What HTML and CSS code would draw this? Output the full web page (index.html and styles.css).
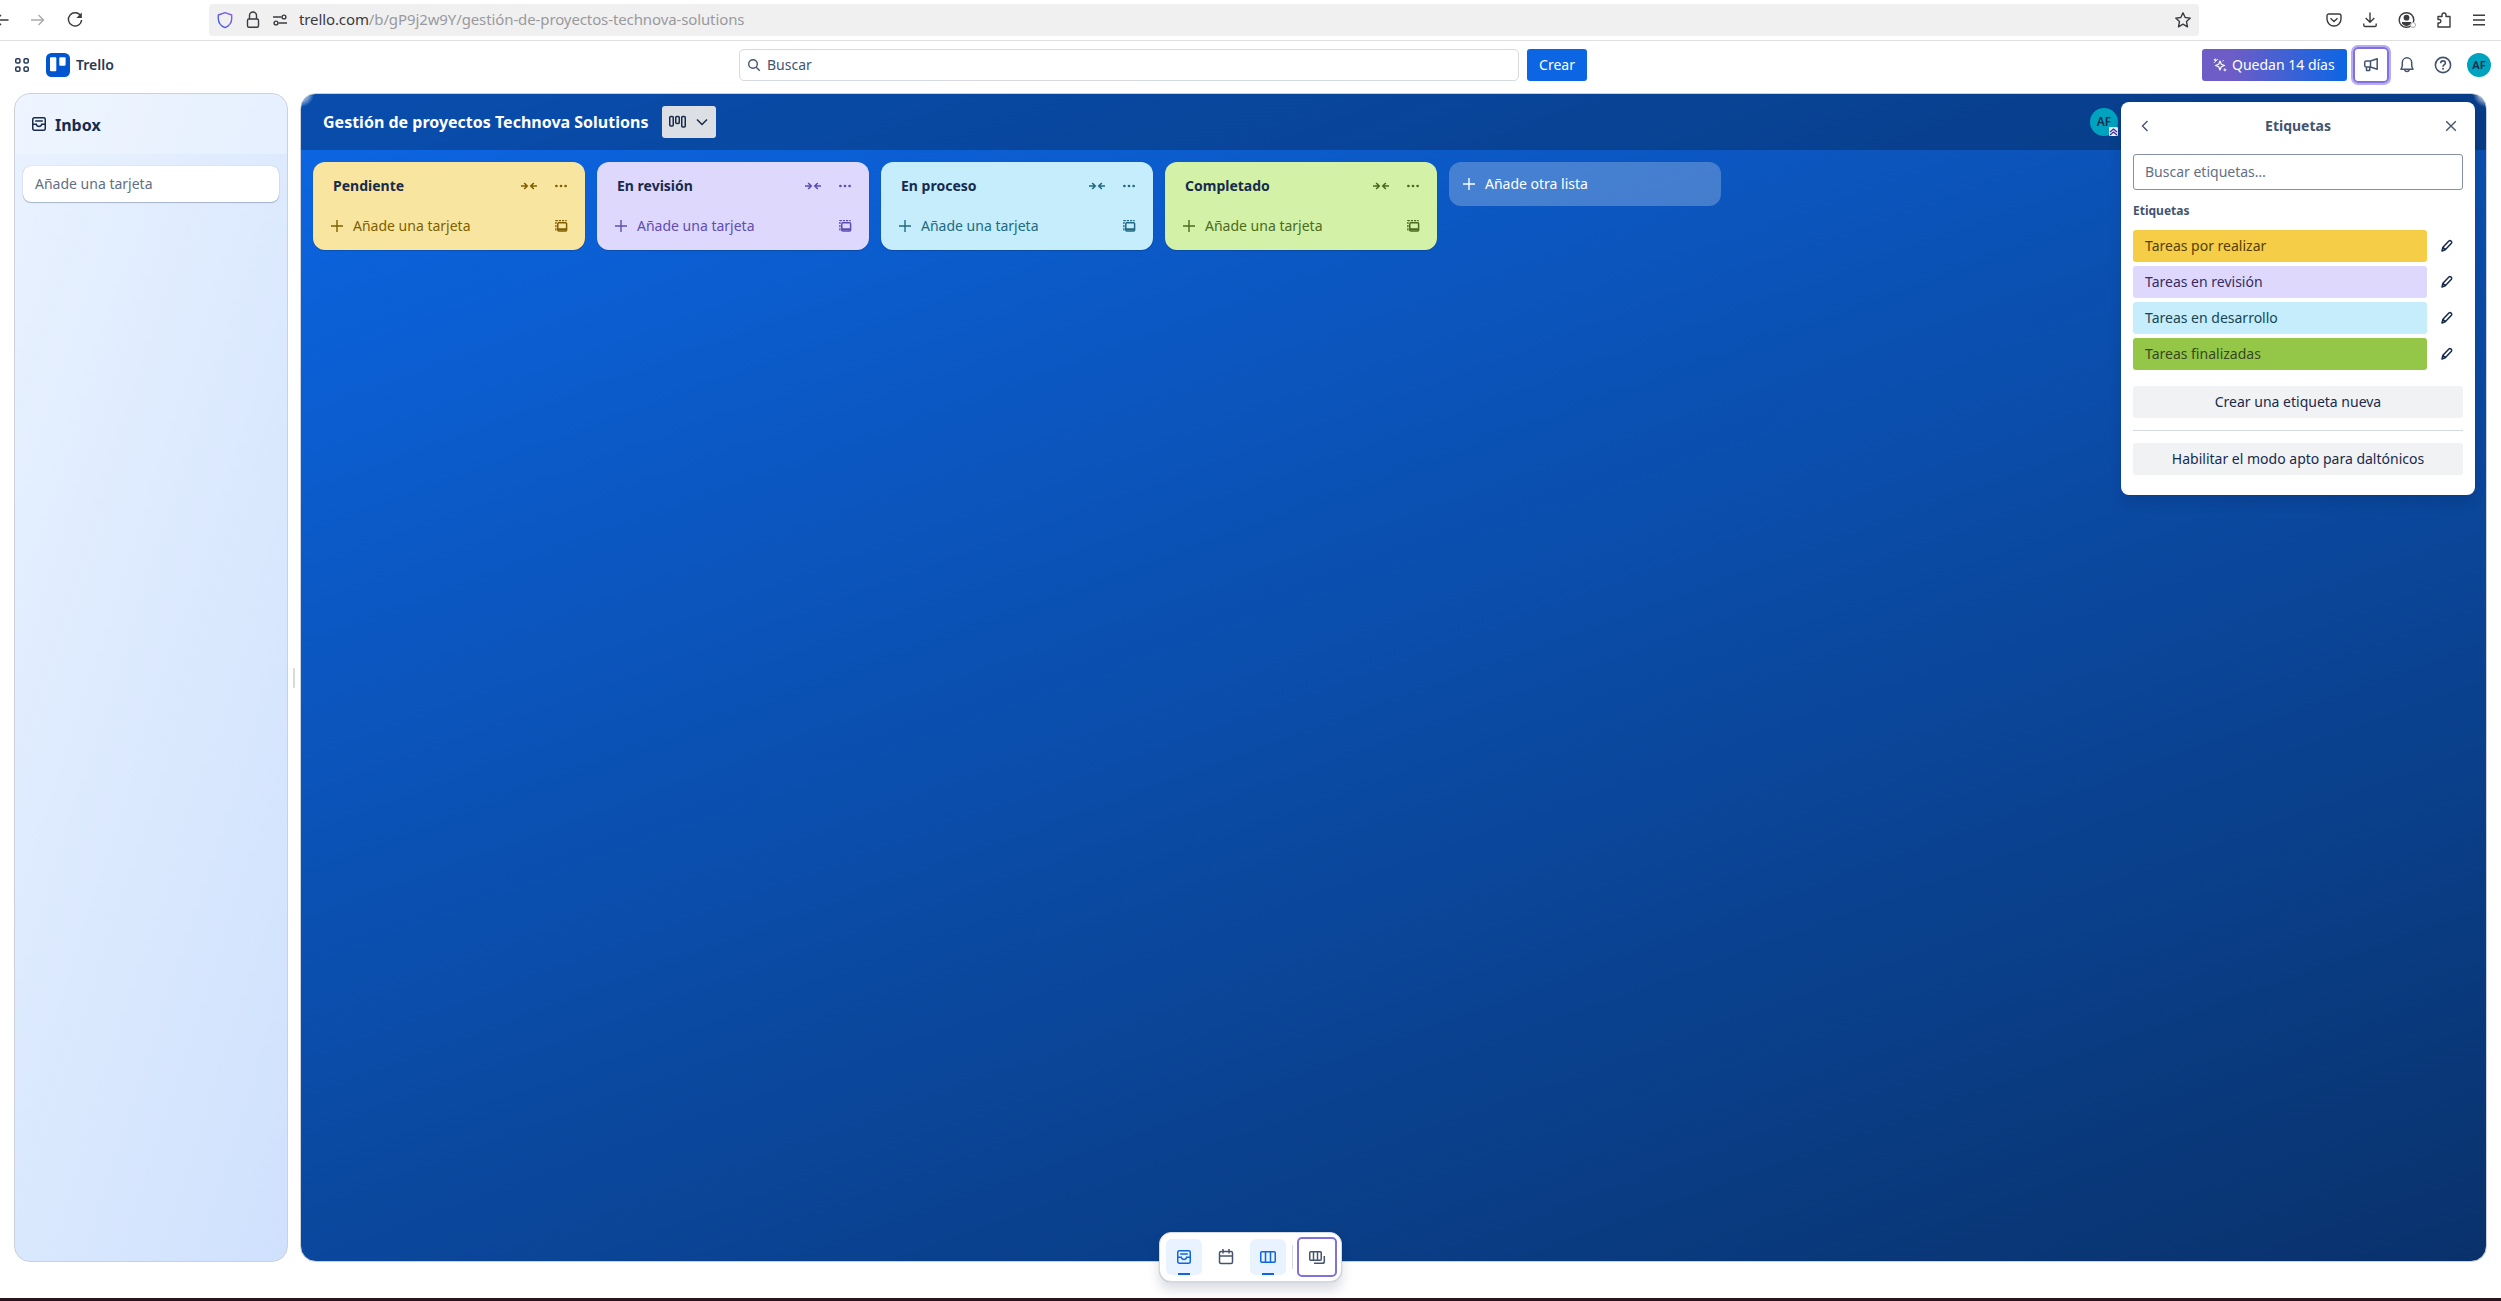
FILE: index.html
```
<!DOCTYPE html>
<html lang="es">
<head>
<meta charset="utf-8">
<title>Gestión de proyectos Technova Solutions | Trello</title>
<link rel="stylesheet" href="styles.css">
</head>
<body>
<svg class="defs" width="0" height="0">
  <symbol id="collapse" viewBox="0 0 16 16"><path d="M0 8h6M3.2 5 6.2 8l-3 3M16 8h-6M12.8 5l-3 3 3 3" fill="none" stroke="currentColor" stroke-width="1.6"/></symbol>
  <symbol id="more" viewBox="0 0 16 16"><g fill="currentColor"><circle cx="3.4" cy="8" r="1.35"/><circle cx="8" cy="8" r="1.35"/><circle cx="12.6" cy="8" r="1.35"/></g></symbol>
  <symbol id="plus" viewBox="0 0 16 16"><path d="M8 2v12M2 8h12" fill="none" stroke="currentColor" stroke-width="1.4"/></symbol>
  <symbol id="template" viewBox="0 0 16 16"><g fill="none" stroke="currentColor"><rect x="4.8" y="4.7" width="8.800" height="8.200" rx="1" stroke-width="1.5"/><path d="M4.500 11.300h9" stroke-width="2"/><path d="M2.900 12.500V2.600h10.800" stroke-width="1.300" stroke-dasharray="2.200 1"/></g></symbol>
  <symbol id="inbox" viewBox="0 0 16 16"><g fill="none" stroke="currentColor" stroke-width="1.500"><rect x="1.750" y="1.750" width="12.500" height="12.500" rx="1.500"/><path d="M4.200 5h7.600M2 8.200h3.300c.3 1.500 1.200 2.300 2.700 2.300s2.400-.8 2.700-2.300H14"/></g></symbol>
  <symbol id="pencil" viewBox="0 0 16 16"><path d="m3 13 .9-3.700 6-6.300c1.300-1.300 3.700.8 2.500 2.200l-6.200 6.600zM4 9.400l2.400 2.300" fill="none" stroke="currentColor" stroke-width="1.500" stroke-linejoin="round"/></symbol>
</svg>

<div class="browser-bar">
  <div class="nav-icons">
    <svg width="16" height="16" viewBox="0 0 16 16"><path d="M14.500 8H2M7 3 2 8l5 5" class="ln"/></svg>
    <svg width="16" height="16" viewBox="0 0 16 16" class="muted"><path d="M1 8h12.500M8.500 3l5 5-5 5" class="ln"/></svg>
    <svg width="18" height="18" viewBox="0 0 18 18"><path d="M14.700 5A6.600 6.600 0 1 0 15.600 9" class="ln"/><path d="M15.800 1.500V7h-5.500z" fill="currentColor"/></svg>
  </div>
  <div class="url-bar">
    <svg class="shield" width="18" height="18" viewBox="0 0 18 18"><defs><linearGradient id="sg" x1="0" y1="1" x2="1" y2="0"><stop offset="0" stop-color="#3d5fe0"/><stop offset="1" stop-color="#9059f5"/></linearGradient></defs><path d="M9 1.700 2.300 4v3.500C2.300 11.800 5 15 9 16.700c4-1.700 6.700-4.900 6.700-9.200V4z" fill="none" stroke="url(#sg)" stroke-width="1.400" stroke-linejoin="round"/></svg>
    <svg width="16" height="18" viewBox="0 0 16 18"><path d="M4.500 8V4.500a3.500 3.500 0 0 1 7 0V8" class="ln"/><rect x="2.500" y="8" width="11" height="8.200" rx="1.500" class="ln"/></svg>
    <svg width="16" height="14" viewBox="0 0 16 14"><path d="M1 4h8.500M6.500 10H15" class="ln"/><circle cx="12" cy="4" r="1.900" class="ln"/><circle cx="4" cy="10" r="1.900" class="ln"/></svg>
    <span class="url">trello.com<span>/b/gP9j2w9Y/gestión-de-proyectos-technova-solutions</span></span>
    <svg class="star" width="18" height="18" viewBox="0 0 18 18"><path d="m9 1.800 2.200 4.700 5.100.6-3.800 3.500 1 5.200L9 13.200l-4.500 2.600 1-5.200L1.700 7.100l5.100-.6z" class="ln" stroke-linejoin="round"/></svg>
  </div>
  <div class="tools">
    <svg width="16" height="16" viewBox="0 0 16 16"><path d="M3 2h10c1.200 0 2 .7 2 1.800V7a7 7 0 0 1-14 0V3.800C1 2.700 1.800 2 3 2zM4.500 6.200 8 9.500l3.500-3.300" class="ln" stroke-linejoin="round"/></svg>
    <svg width="16" height="16" viewBox="0 0 16 16"><path d="M8 .5V10M3.700 6 8 10.300 12.300 6M1.800 11.500v1.700c0 .8.500 1.300 1.300 1.300h9.800c.8 0 1.300-.5 1.300-1.300v-1.700" class="ln"/></svg>
    <svg width="18" height="18" viewBox="0 0 18 18"><circle cx="8.500" cy="9" r="7.300" class="ln"/><circle cx="8.500" cy="6.700" r="2.900" fill="#3b3b40"/><path d="M4 11h9v1.500c-2 3.200-7 3.200-9 0z" fill="#3b3b40"/><circle cx="15" cy="14" r="2.500" fill="#fff" stroke="#aaa"/></svg>
    <svg width="16" height="18" viewBox="0 0 16 18"><path d="M2 5.500h4V4a2 2 0 0 1 4 0v1.500h4V16H2v-4h1.500a1.800 1.800 0 0 0 0-3.500H2z" class="ln" stroke-linejoin="round"/></svg>
    <svg width="14" height="14" viewBox="0 0 14 14"><path d="M1 2.300h12M1 7h12M1 11.700h12" class="ln"/></svg>
  </div>
</div>

<header class="app-header">
  <div class="brand">
    <svg class="apps" width="16" height="16" viewBox="0 0 16 16"><g fill="none" stroke="currentColor" stroke-width="1.500"><rect x="1.750" y="1.750" width="4.200" height="4.200" rx="1.300"/><rect x="10.050" y="1.750" width="4.200" height="4.200" rx="1.300"/><rect x="1.750" y="10.050" width="4.200" height="4.200" rx="1.300"/><rect x="10.050" y="10.050" width="4.200" height="4.200" rx="1.300"/></g></svg>
    <svg width="24" height="24" viewBox="0 0 24 24"><rect width="24" height="24" rx="5.500" fill="#0055d1"/><rect x="4" y="4.300" width="6.300" height="14" rx="1" fill="#fff"/><rect x="13.300" y="4.300" width="6.300" height="8.500" rx="1" fill="#fff"/></svg>
    <span>Trello</span>
  </div>
  <div class="search"><svg width="14" height="14" viewBox="0 0 14 14"><g fill="none" stroke="currentColor" stroke-width="1.400"><circle cx="6" cy="6" r="4.300"/><path d="m9.200 9.200 3.600 3.600"/></g></svg>Buscar</div>
  <button class="create">Crear</button>
  <div class="account">
    <div class="trial"><svg width="14" height="14" viewBox="0 0 14 14"><path d="m7 3 1.300 3.200L11.500 7.500 8.300 8.800 7 12 5.700 8.800 2.500 7.500l3.200-1.300z" fill="none" stroke="#fff" stroke-width="1.200" stroke-linejoin="round"/><path d="M1 4.800 4.800 1M.9 1.800h2.400M2.100.6V3M11.900 10.500v2.800M10.500 11.900h2.800M9.500 3.200l1.200-.8" stroke="#fff" stroke-width="1"/></svg>Quedan 14 días</div>
    <div class="mega"><svg width="16" height="16" viewBox="0 0 16 16"><path d="m7.500 4 6.700-2.200v10.400L7.500 10M7.500 4v6H3.200c-1 0-1.500-.5-1.500-1.500v-3c0-1 .5-1.500 1.500-1.500zM3.500 10v3.500h3.200V10" fill="none" stroke="currentColor" stroke-width="1.500" stroke-linejoin="round"/></svg></div>
    <svg width="16" height="18" viewBox="0 0 16 18"><path d="M2 13.200c1-1.500 1.300-2.300 1.300-4.200V6.500a4.700 4.700 0 0 1 9.400 0V9c0 1.900.3 2.700 1.300 4.200zM5.700 13.500c.2 2.700 4.400 2.700 4.600 0" fill="none" stroke="currentColor" stroke-width="1.500" stroke-linejoin="round"/></svg>
    <svg width="18" height="18" viewBox="0 0 18 18"><g fill="none" stroke="currentColor" stroke-width="1.600"><circle cx="9" cy="9" r="7.600"/><path d="M6.700 7.200c0-3.200 4.700-3 4.700-.2 0 1.700-2.400 1.700-2.400 3.700"/></g><circle cx="9" cy="12.800" r="1" fill="currentColor"/></svg>
    <div class="avatar">AF</div>
  </div>
</header>

<main class="workspace">
  <aside class="inbox">
    <div class="inbox-head"><svg width="16" height="16"><use href="#inbox"/></svg><span>Inbox</span></div>
    <div class="inbox-card">Añade una tarjeta</div>
  </aside>
  <div class="handle"></div>
  <section class="board">
    <div class="board-head">
      <h1>Gestión de proyectos Technova Solutions</h1>
      <div class="view">
        <svg width="20" height="16" viewBox="0 0 20 16"><g fill="none" stroke="currentColor" stroke-width="1.500"><rect x="1.750" y="2.400" width="3.500" height="9.500" rx="1"/><rect x="7.750" y="2.400" width="3.500" height="7" rx="1"/><rect x="13.750" y="2.400" width="3.500" height="10.500" rx="1"/></g></svg>
        <svg width="16" height="16" viewBox="0 0 16 16"><path d="m3 5.500 5 5 5-5" fill="none" stroke="currentColor" stroke-width="1.500"/></svg>
      </div>
      <div class="member">AF<svg width="9" height="9" viewBox="0 0 9 9"><rect width="9" height="9" rx="1" fill="#eef"/><path d="m1 5 3.500-3L8 5M1 8l3.500-3L8 8" fill="none" stroke="#403294" stroke-width="1.300"/></svg></div>
    </div>
    <div class="lists">
      <article class="list yellow"><h2>Pendiente</h2><svg><use href="#collapse"/></svg><svg><use href="#more"/></svg><div class="add"><svg><use href="#plus"/></svg>Añade una tarjeta</div><svg><use href="#template"/></svg></article>
      <article class="list purple"><h2>En revisión</h2><svg><use href="#collapse"/></svg><svg><use href="#more"/></svg><div class="add"><svg><use href="#plus"/></svg>Añade una tarjeta</div><svg><use href="#template"/></svg></article>
      <article class="list sky"><h2>En proceso</h2><svg><use href="#collapse"/></svg><svg><use href="#more"/></svg><div class="add"><svg><use href="#plus"/></svg>Añade una tarjeta</div><svg><use href="#template"/></svg></article>
      <article class="list lime"><h2>Completado</h2><svg><use href="#collapse"/></svg><svg><use href="#more"/></svg><div class="add"><svg><use href="#plus"/></svg>Añade una tarjeta</div><svg><use href="#template"/></svg></article>
      <div class="add-list"><svg><use href="#plus"/></svg>Añade otra lista</div>
    </div>
  </section>
</main>

<section class="popover">
  <div class="pop-head">
    <svg width="16" height="16" viewBox="0 0 16 16"><path d="m10.500 3-5 5 5 5" class="pl"/></svg>
    <h3>Etiquetas</h3>
    <svg width="16" height="16" viewBox="0 0 16 16"><path d="m3.200 3.200 9.600 9.600M12.800 3.200l-9.600 9.600" class="pl"/></svg>
  </div>
  <div class="field">Buscar etiquetas…</div>
  <h4>Etiquetas</h4>
  <div class="labels">
    <div class="row"><span class="tag t-yellow">Tareas por realizar</span><svg><use href="#pencil"/></svg></div>
    <div class="row"><span class="tag t-purple">Tareas en revisión</span><svg><use href="#pencil"/></svg></div>
    <div class="row"><span class="tag t-sky">Tareas en desarrollo</span><svg><use href="#pencil"/></svg></div>
    <div class="row"><span class="tag t-green">Tareas finalizadas</span><svg><use href="#pencil"/></svg></div>
  </div>
  <button class="wide">Crear una etiqueta nueva</button>
  <hr>
  <button class="wide">Habilitar el modo apto para daltónicos</button>
</section>

<nav class="dock">
  <div class="dock-item on"><svg width="16" height="16"><use href="#inbox"/></svg></div>
  <div class="dock-item"><svg width="18" height="18" viewBox="0 0 18 18"><g fill="none" stroke="currentColor" stroke-width="1.500"><rect x="2.500" y="3.500" width="13" height="12" rx="1.500"/><path d="M2.500 8h13M6 1v4.500M12 1v4.500"/></g></svg></div>
  <div class="dock-item on"><svg width="18" height="18" viewBox="0 0 18 18"><g fill="none" stroke="currentColor" stroke-width="1.500"><rect x="1.750" y="3.750" width="14.500" height="10.500" rx="1"/><path d="M6.500 4v10M11.500 4v10"/></g></svg></div>
  <div class="sep"></div>
  <div class="dock-item switch"><svg width="18" height="18" viewBox="0 0 18 18"><g fill="none" stroke="currentColor" stroke-width="1.500"><rect x="1.750" y="3.750" width="11.500" height="8.500" rx="1"/><path d="M5.500 4v8M9.500 4v8M6 15.300h8.500c1.200 0 1.800-.6 1.800-1.800V8"/></g></svg></div>
</nav>
<div class="desktop-edge"></div>
</body>
</html>
```
FILE: styles.css
```
* { box-sizing: border-box; }
body {
  margin: 0;
  height: 1301px;
  display: flex;
  flex-direction: column;
  overflow: hidden;
  background: #fff;
  color: #172b4d;
  font: 14px/20px "Noto Sans", sans-serif;
}
svg { display: block; flex: none; }
.defs { position: absolute; }
h1, h2, h3, h4 { margin: 0; }
button { font: inherit; border: 0; padding: 0; }
.ln { fill: none; stroke: currentColor; stroke-width: 1.4; }
.pl { fill: none; stroke: currentColor; stroke-width: 1.4; }

.browser-bar {
  flex: none;
  height: 41px;
  display: flex;
  align-items: flex-start;
  padding-top: 4px;
  border-bottom: 1px solid #e0e0e1;
  color: #3b3b40;
}
.nav-icons { width: 209px; height: 32px; display: flex; align-items: center; gap: 20px; margin-left: -6px; margin-right: 6px; }
.nav-icons .muted { color: #aaa; }
.url-bar {
  width: 1990px;
  height: 32px;
  display: flex;
  align-items: center;
  border-radius: 4px;
  background: #f0f0f1;
  padding: 0 7px;
  gap: 11px;
}
.url { font-size: 15px; letter-spacing: -.11px; padding-bottom: 2px; white-space: nowrap; }
.url span { color: #9a9a9d; }
.star { margin-left: auto; }
.tools { height: 32px; display: flex; align-items: center; gap: 20px; margin-left: 127px; }

.app-header {
  flex: none;
  height: 52px;
  display: flex;
  align-items: center;
  padding: 0 10px 4px 14px;
  color: #44546f;
}
.brand { width: 725px; display: flex; align-items: center; gap: 6px; color: #253858; font-weight: 600; }
.apps { margin-right: 10px; }
.search {
  width: 780px;
  height: 32px;
  display: flex;
  align-items: center;
  gap: 6px;
  padding-left: 7px;
  border: 1px solid #d5d9e0;
  border-radius: 5px;
}
.create { width: 60px; height: 32px; margin-left: 8px; border-radius: 3px; background: #0c66e4; color: #fff; }
.account { margin-left: auto; display: flex; align-items: center; }
.trial {
  width: 145px;
  height: 32px;
  display: flex;
  align-items: center;
  gap: 5px;
  padding-left: 11px;
  border-radius: 3px;
  background: linear-gradient(90deg, #6e5dc6 20%, #0c66e4);
  color: #fff;
  white-space: nowrap;
}
.mega {
  width: 36px;
  height: 36px;
  display: grid;
  place-items: center;
  margin: 0 10px 0 6px;
  border: 2px solid #8270db;
  border-radius: 5px;
  box-shadow: 0 0 0 2px #b8acf6;
}
.account > svg + svg { margin: 0 15px 0 19px; }
.avatar, .member {
  width: 24px;
  height: 24px;
  border-radius: 50%;
  background: #00a3bf;
  color: #172b4d;
  display: grid;
  place-items: center;
  font-size: 11px;
  font-weight: 600;
}

.workspace { flex: none; height: 1169px; display: flex; padding: 0 14px; }
.inbox {
  width: 274px;
  border: 1px solid #cbd0d9;
  border-radius: 16px;
  overflow: hidden;
  background: linear-gradient(108deg, #e9f2ff, #cfe1fd);
}
.inbox-head {
  height: 60px;
  display: flex;
  align-items: center;
  gap: 8px;
  padding-left: 16px;
  background: rgba(255, 255, 255, .25);
  font-size: 16px;
  font-weight: 700;
}
.inbox-head span { padding-top: 2px; }
.inbox-card {
  height: 36px;
  margin: 12px 8px;
  padding: 8px 12px;
  border-radius: 8px;
  background: #fff;
  color: #626f86;
  box-shadow: 0 1px 1px rgba(9, 30, 66, .25), 0 0 1px rgba(9, 30, 66, .31);
}
.handle { width: 2px; height: 20px; margin: 575px 5px 0; border-radius: 1px; background: #d5d9e0; }
.board {
  width: 2187px;
  overflow: hidden;
  border: 1px solid #cbd0d9;
  border-radius: 16px;
  background: linear-gradient(160deg, #0c66e4, #09326c);
}
.board-head {
  height: 56px;
  display: flex;
  align-items: center;
  padding-left: 22px;
  background:
    radial-gradient(circle at 0 0, rgba(255, 255, 255, .7) 5px, transparent 13px),
    radial-gradient(circle at 100% 0, rgba(255, 255, 255, .7) 5px, transparent 13px),
    rgba(0, 0, 0, .24);
}
.board-head h1 { width: 339px; color: #fff; font-size: 16px; font-weight: 700; line-height: 24px; white-space: nowrap; }
.view {
  width: 54px;
  height: 32px;
  display: flex;
  align-items: center;
  justify-content: center;
  gap: 6px;
  border-radius: 3px;
  background: #dcdfe4;
}
.member { position: relative; width: 28px; height: 28px; margin-left: 1374px; font-size: 12px; }
.member svg { position: absolute; right: 0; bottom: 0; }
.lists { display: flex; align-items: flex-start; gap: 12px; padding: 12px; }
.list {
  width: 272px;
  height: 88px;
  display: grid;
  grid-template-columns: 1fr 32px 16px;
  grid-template-rows: 24px 40px;
  row-gap: 8px;
  align-items: center;
  padding: 12px 16px 0 20px;
  align-content: start;
  border-radius: 12px;
  box-shadow: 0 1px 1px rgba(9, 30, 66, .25);
}
.list h2 { font-size: 14px; font-weight: 700; color: #172b4d; }
.list svg, .add-list svg, .row svg { width: 16px; height: 16px; }
.add { grid-column: 1 / 3; display: flex; align-items: center; gap: 8px; margin-left: -4px; }
.yellow { background: #f8e6a0; color: #7f5f01; }
.purple { background: #dfd8fd; color: #5e4db2; }
.sky { background: #c6edfb; color: #206a83; }
.lime { background: #d3f1a7; color: #4c6b1f; }
.add-list {
  width: 272px;
  height: 44px;
  display: flex;
  align-items: center;
  gap: 8px;
  padding-left: 12px;
  border-radius: 12px;
  background: rgba(255, 255, 255, .24);
  color: #fff;
}

.popover {
  position: absolute;
  left: 2121px;
  top: 102px;
  width: 354px;
  height: 393px;
  padding: 4px 12px;
  border-radius: 8px;
  background: #fff;
  box-shadow: 0 8px 12px rgba(9, 30, 66, .15), 0 0 1px rgba(9, 30, 66, .31);
}
.pop-head { height: 40px; display: flex; align-items: center; justify-content: space-between; padding: 0 4px; color: #44546f; }
.pop-head h3 { font-size: 14px; font-weight: 700; }
.field { height: 36px; margin-top: 8px; padding: 7px 11px; border: 1px solid #8590a2; border-radius: 3px; color: #626f86; }
.popover h4 { margin: 13px 0 11px; color: #44546f; font-size: 12px; line-height: 16px; font-weight: 700; }
.labels { display: flex; flex-direction: column; gap: 4px; }
.row { display: flex; align-items: center; gap: 12px; }
.tag { width: 294px; height: 32px; padding: 6px 12px; border-radius: 3px; }
.t-yellow { background: #f5cd47; color: #533f04; }
.t-purple { background: #dfd8fd; color: #352c63; }
.t-sky { background: #c6edfb; color: #164555; }
.t-green { background: #94c748; color: #37471f; }
.wide { display: block; width: 100%; height: 32px; margin-top: 16px; border-radius: 3px; background: #f1f2f4; color: #172b4d; }
hr { height: 1px; margin: 12px 0; border: 0; background: #d5d9e0; }
hr + .wide { margin-top: 0; }

.dock {
  position: absolute;
  left: 1159px;
  top: 1232px;
  width: 183px;
  height: 50px;
  display: flex;
  align-items: center;
  padding-left: 6px;
  border: 1px solid #d5d9e0;
  border-radius: 12px;
  background: #fff;
  box-shadow: 0 8px 12px rgba(9, 30, 66, .15), 0 0 1px rgba(9, 30, 66, .31);
}
.dock-item { width: 36px; height: 36px; margin-right: 6px; display: grid; place-items: center; border-radius: 6px; color: #44546f; }
.on { background: linear-gradient(#0c66e4, #0c66e4) center bottom / 12px 2px no-repeat #e9f2ff; color: #0c66e4; }
.sep { width: 1px; height: 24px; margin-right: 4px; background: #d5d9e0; }
.switch { width: 40px; height: 40px; margin: 0; border: 2px solid #8270db; border-radius: 5px; }
.desktop-edge { height: 3px; margin-top: auto; background: #2a1420; }
```
